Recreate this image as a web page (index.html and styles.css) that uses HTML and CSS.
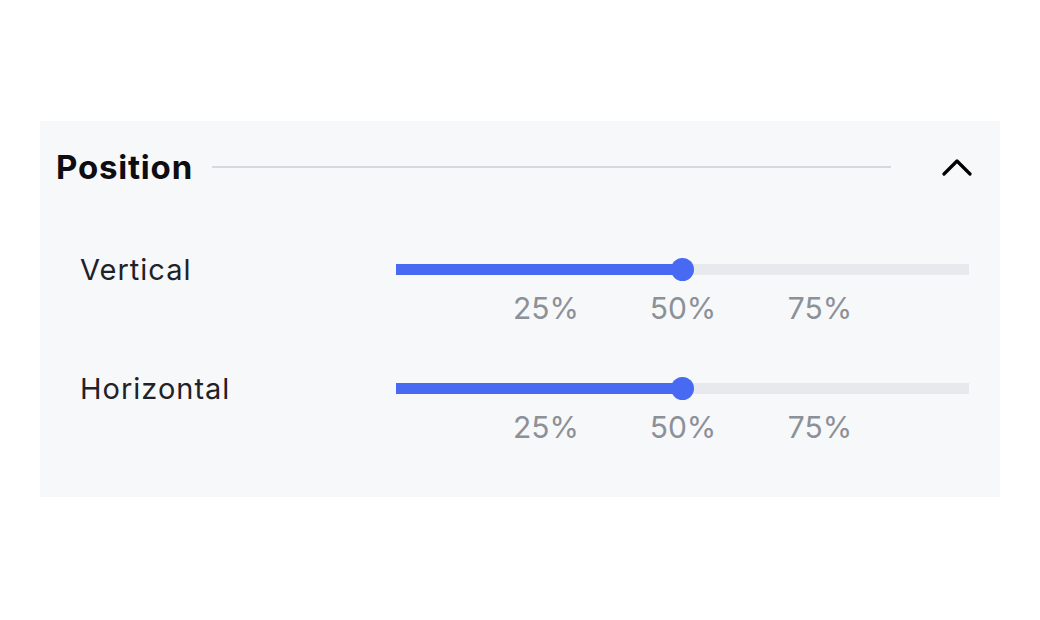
FILE: index.html
```html
<!DOCTYPE html>
<html lang="en">
<head>
    <meta charset="UTF-8">
    <meta name="viewport" content="width=device-width, initial-scale=1.0">
    <title>Position</title>
    <link rel="stylesheet" href="styles.css">
</head>
<body>
    <div class="panel">
        <div class="panel-header">
            <h2 class="panel-title">Position</h2>
            <div class="divider"></div>
            <button class="toggle" type="button" aria-label="Collapse">
                <svg width="32" height="18" viewBox="0 0 32 18">
                    <path d="M3 16 L16 3 L29 16" fill="none" stroke="#000" stroke-width="3.2" stroke-linecap="round" stroke-linejoin="round"/>
                </svg>
            </button>
        </div>

        <div class="field">
            <span class="field-label">Vertical</span>
            <div class="slider">
                <div class="track">
                    <div class="fill" style="width: 50%"></div>
                </div>
                <div class="scale">
                    <span>25%</span>
                    <span>50%</span>
                    <span>75%</span>
                </div>
            </div>
        </div>

        <div class="field">
            <span class="field-label">Horizontal</span>
            <div class="slider">
                <div class="track">
                    <div class="fill" style="width: 50%"></div>
                </div>
                <div class="scale">
                    <span>25%</span>
                    <span>50%</span>
                    <span>75%</span>
                </div>
            </div>
        </div>
    </div>
</body>
</html>
```

FILE: styles.css
```css
body {
    margin: 0;
    padding: 0;
    background-color: #ffffff;
    font-family: Inter, "Noto Sans", sans-serif;
}

.panel {
    width: 960px;
    margin: 121px 40px 0;
    padding: 0 0 52px;
    background: #f7f8fa;
}

.panel-header {
    display: flex;
    align-items: center;
    height: 92px;
    padding: 0 27px 0 16px;
}

.panel-title {
    margin: 0;
    font-size: 33px;
    font-weight: 700;
    color: #0d0d12;
    letter-spacing: 0.8px;
}

.divider {
    flex: 1;
    height: 2px;
    margin: 0 50px 0 19px;
    background: #d6d8dd;
}

.toggle {
    padding: 0;
    border: none;
    background: none;
    width: 32px;
    height: 18px;
    display: flex;
}

.field {
    display: grid;
    grid-template-columns: 356px 573px;
    margin-top: 45px;
}

.field + .field {
    margin-top: 51px;
}

.field-label {
    padding-left: 40px;
    height: 24px;
    line-height: 24px;
    font-size: 29px;
    letter-spacing: 1px;
    color: #1f2228;
}

.slider {
    display: flex;
    flex-direction: column;
}

.track {
    position: relative;
    height: 11px;
    margin: 6px 0 7px;
    background: #e7e9ec;
}

.fill {
    position: relative;
    height: 100%;
    background: #4869f2;
}

.fill::after {
    content: "";
    position: absolute;
    right: -11px;
    top: -6px;
    width: 23px;
    height: 23px;
    border-radius: 50%;
    background: #4869f2;
}

.scale {
    display: flex;
    gap: 67px;
    margin: 8px 0 0 115px;
}

.scale span {
    width: 70px;
    text-align: center;
    line-height: 36px;
    font-size: 30px;
    color: #8c9097;
}
```
